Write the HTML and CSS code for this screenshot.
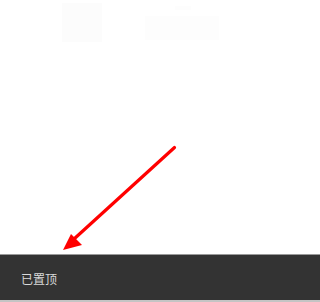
FILE: index.html
```html
<!DOCTYPE html>
<html lang="zh-CN">
<head>
  <meta charset="UTF-8">
  <title>已置顶</title>
  <link rel="stylesheet" href="styles.css">
</head>
<body>
<div class="page">
  <!-- 背景页面（淡化） -->
  <div class="content">
    <div class="ghost">
      <div class="ghost-pic"></div>
      <div class="ghost-info">
        <div class="ghost-line short"></div>
        <div class="ghost-box"></div>
      </div>
    </div>
    <!-- 标注箭头 -->
    <svg class="arrow" width="320" height="254" viewBox="0 0 320 254">
      <line x1="174.5" y1="147.5" x2="74" y2="239" stroke="#ff0000" stroke-width="3.2" stroke-linecap="round"/>
      <polygon points="63,250 71,234 82,245" fill="#ff0000"/>
    </svg>
  </div>
  <!-- 提示条 -->
  <div class="toast">已置顶</div>
</div>
</body>
</html>
```

FILE: styles.css
```css
* {
  padding: 0;
  margin: 0;
  box-sizing: border-box;
}

body {
  background: #fff;
  font-family: "Noto Sans CJK SC", "Noto Sans", sans-serif;
}

.page {
  width: 320px;
  height: 302px;
  display: flex;
  flex-direction: column;
}

.content {
  flex: 1;
  position: relative;
  padding: 3px 0 0 62px;
}

.ghost {
  display: flex;
  gap: 43px;
}

.ghost-pic {
  width: 40px;
  height: 39px;
  background: #fcfcfc;
}

.ghost-info {
  padding-top: 3px;
  display: flex;
  flex-direction: column;
  gap: 6px;
}

.ghost-line {
  height: 4px;
  background: #fdfdfd;
}

.ghost-line.short {
  width: 16px;
  margin-left: 30px;
}

.ghost-box {
  width: 74px;
  height: 24px;
  background: #fdfdfd;
}

.arrow {
  position: absolute;
  left: 0;
  top: 0;
}

.toast {
  height: 48px;
  background: #333333;
  border-top: 1px solid #9a9a9a;
  border-bottom: 2px solid #c4c4c4;
  display: flex;
  align-items: center;
  padding-left: 21px;
  padding-top: 1px;
  color: #d9d9d9;
  font-size: 12px;
}
```
